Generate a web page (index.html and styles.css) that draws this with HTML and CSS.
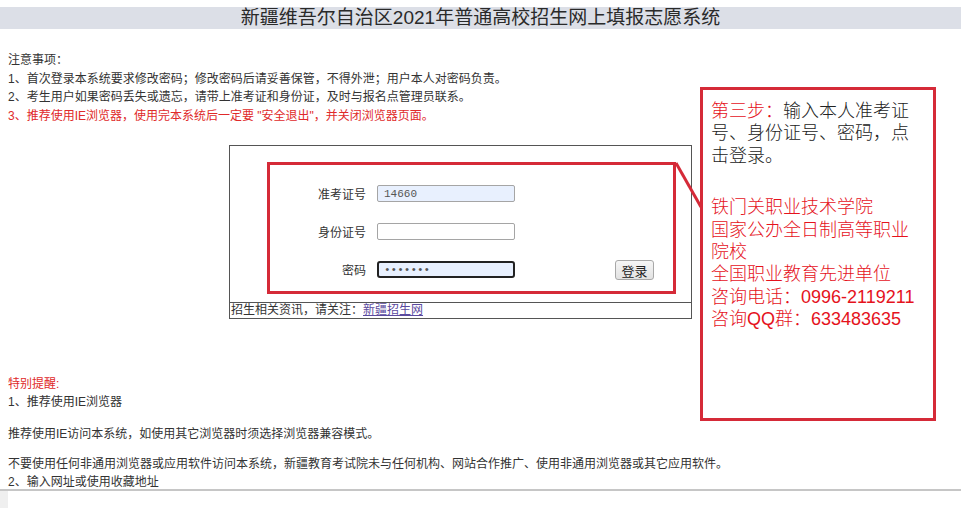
FILE: index.html
```html
<!DOCTYPE html>
<html lang="zh-CN">
<head>
    <meta charset="UTF-8">
    <title>新疆维吾尔自治区2021年普通高校招生网上填报志愿系统</title>
    <link rel="stylesheet" href="styles.css">
</head>
<body>

<div class="header">新疆维吾尔自治区2021年普通高校招生网上填报志愿系统</div>

<!-- 注意事项 -->
<div class="notes">
    <div>注意事项：</div>
    <div>1、首次登录本系统要求修改密码；修改密码后请妥善保管，不得外泄；用户本人对密码负责。</div>
    <div>2、考生用户如果密码丢失或遗忘，请带上准考证和身份证，及时与报名点管理员联系。</div>
    <div class="red">3、推荐使用IE浏览器，使用完本系统后一定要 "安全退出"，并关闭浏览器页面。</div>
</div>

<!-- 登录框 -->
<div class="login">
    <div class="login-main">
        <div class="mark">
            <div class="row">
                <label for="zkzh">准考证号</label>
                <input type="text" id="zkzh" class="filled" value="14660">
            </div>
            <div class="row">
                <label for="sfzh">身份证号</label>
                <input type="text" id="sfzh">
            </div>
            <div class="row">
                <label for="mm">密码</label>
                <input type="password" id="mm" class="filled focus" value="1234567">
                <button type="button">登录</button>
            </div>
        </div>
    </div>
    <div class="login-foot">招生相关资讯，请关注：<a href="#">新疆招生网</a></div>
</div>

<!-- 特别提醒 -->
<div class="remind">
    <div class="red">特别提醒:</div>
    <div>1、推荐使用IE浏览器</div>
    <p>推荐使用IE访问本系统，如使用其它浏览器时须选择浏览器兼容模式。</p>
    <p class="tight">不要使用任何非通用浏览器或应用软件访问本系统，新疆教育考试院未与任何机构、网站合作推广、使用非通用浏览器或其它应用软件。</p>
    <div>2、输入网址或使用收藏地址</div>
</div>

<!-- 标注 -->
<svg class="pointer" width="30" height="50" viewBox="0 0 30 50">
    <line x1="2" y1="2" x2="27" y2="46" stroke="#d52a38" stroke-width="3"/>
</svg>
<div class="callout">
    <div><span class="red">第三步：</span>输入本人准考证<br>号、身份证号、密码，点<br>击登录。</div>
    <div class="red school">铁门关职业技术学院<br>国家公办全日制高等职业<br>院校<br>全国职业教育先进单位<br>咨询电话：0996-2119211<br>咨询QQ群：633483635</div>
</div>

<div class="bottom-bar"><div class="strip"></div></div>

</body>
</html>
```

FILE: styles.css
```css
body {
    margin: 0;
    font-family: "Liberation Sans", "Noto Sans CJK SC", sans-serif;
    font-size: 12px;
    color: #333;
    background: #fff;
}
.red {
    color: #e02a2a;
}
.header {
    margin-top: 7px;
    height: 22px;
    line-height: 22px;
    background-color: #dcdfe7;
    text-align: center;
    font-size: 19px;
    color: #2a2a2a;
}
.notes {
    margin-top: 22px;
    padding-left: 8px;
    line-height: 18.5px;
}
.login {
    box-sizing: border-box;
    width: 463px;
    margin: 20px 0 0 229px;
    border: 1px solid #555;
}
.login-main {
    height: 156px;
    padding: 16px 15px 0 37px;
    box-sizing: border-box;
}
.mark {
    box-sizing: border-box;
    height: 132px;
    border: 3px solid #d52a38;
    padding-top: 20px;
}
.row {
    display: flex;
    align-items: center;
    height: 17px;
    margin-bottom: 21px;
}
.row label {
    width: 96px;
    margin-right: 11px;
    text-align: right;
    color: #333;
}
.row input {
    box-sizing: border-box;
    width: 138px;
    height: 17px;
    margin: 0;
    padding: 0 6px;
    border: 1px solid #a5a5a5;
    border-radius: 2px;
    font-family: "Liberation Mono", monospace;
    font-size: 11px;
    color: #555;
    outline: none;
}
.row input.filled {
    background-color: #e8f0fe;
}
.row input.focus {
    border: 2px solid #222;
    border-radius: 3px;
    padding-left: 5px;
}
.row button {
    box-sizing: border-box;
    width: 39px;
    height: 20px;
    margin-left: 100px;
    padding: 0;
    border: 1px solid #a8a8a8;
    border-radius: 3px;
    background: linear-gradient(#f6f6f6, #e2e2e2);
    font-family: "Noto Sans CJK SC", sans-serif;
    font-size: 13px;
    color: #222;
}
.login-foot {
    border-top: 1px solid #555;
    height: 15px;
    line-height: 15px;
    padding-left: 1px;
}
.login-foot a {
    color: #5b4a9e;
}
.remind {
    margin-top: 56px;
    padding-left: 8px;
    line-height: 18px;
}
.remind p {
    margin: 14px 0 0;
}
.remind p.tight {
    margin-top: 12px;
}
.pointer {
    position: absolute;
    left: 674px;
    top: 161px;
}
.callout {
    position: absolute;
    left: 700px;
    top: 87px;
    box-sizing: border-box;
    width: 236px;
    height: 334px;
    border: 3px solid #d52a38;
    padding: 10px 0 0 8px;
    font-family: "Liberation Sans", "Noto Sans CJK SC", sans-serif;
    font-size: 18px;
    font-weight: 300;
    line-height: 22.4px;
    color: #222;
    background: #fff;
}
.callout .red {
    color: #e5121c;
}
.callout .school {
    margin-top: 29px;
}
.bottom-bar {
    position: fixed;
    left: 0;
    right: 0;
    bottom: 0;
    height: 17px;
    border-top: 2px solid #c6c6c6;
    background: #fff;
}
.strip {
    width: 8px;
    height: 100%;
    background-color: #efefef;
}
```
